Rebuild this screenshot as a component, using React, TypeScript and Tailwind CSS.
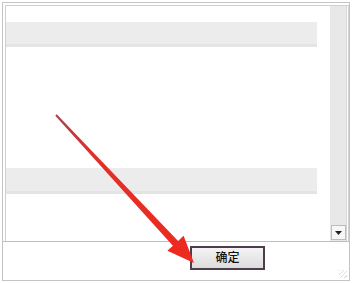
export default function App() {
  return (
    <div className="relative w-[355px] h-[283px] bg-white p-[2px] font-['Liberation_Sans','Noto_Sans_CJK_SC',sans-serif]">
      <div className="flex h-[279px] w-[348px] flex-col border border-[#c4c4c4] bg-white">
        {/* list */}
        <div className="ml-[2px] mt-[2px] flex h-[236px] border-l border-t border-r border-[#d0d0d0]">
          <div className="flex-1 pr-[13px] pt-[16px]">
            <div className="h-[25px] border-b-[3px] border-[#e4e4e4] bg-[#ececec]" />
            <div className="mt-[121px] h-[26px] border-b-[3px] border-[#e4e4e4] bg-[#ececec]" />
          </div>
          <div className="flex w-[16px] flex-col justify-end border-l border-[#e6e6e6] bg-[#e8e8e8] pb-[1px]">
            <div className="flex h-[15px] items-center justify-center border border-[#bdbdbd] bg-[#f7f7f7]">
              <svg width="7" height="4" viewBox="0 0 7 4">
                <path d="M0 0h7L3.5 4z" fill="#222" />
              </svg>
            </div>
          </div>
          <div className="w-[2px] border-l border-[#d6d6d6] bg-white" />
        </div>
        <div className="h-px bg-[#bdbdbd]" />
        {/* footer */}
        <div className="relative flex-1 pl-[187px] pt-[4px]">
          <button className="flex h-[24px] w-[75px] items-center justify-center border-2 border-[#4e3c4a] bg-gradient-to-b from-[#f4f4f4] to-[#dcdcdc] text-[12px] font-medium text-[#111]">
            确定
          </button>
          <div className="absolute bottom-[2px] right-[2px] h-[8px] w-[8px] bg-[repeating-linear-gradient(135deg,#dedede_0_1px,transparent_1px_3px)]" />
        </div>
      </div>
      {/* red arrow */}
      <svg className="pointer-events-none absolute left-0 top-0" width="355" height="283" viewBox="0 0 355 283">
        <defs>
          <linearGradient id="ar" x1="56" y1="115" x2="194" y2="263" gradientUnits="userSpaceOnUse">
            <stop offset="0" stopColor="#a8404c" />
            <stop offset="0.25" stopColor="#e0302a" />
            <stop offset="1" stopColor="#ee2a1e" />
          </linearGradient>
        </defs>
        <polygon
          points="55.3,115.7 172.9,245.7 167.4,250.8 194,263 183.6,235.8 178.1,240.9 56.7,114.3"
          fill="url(#ar)"
        />
      </svg>
    </div>
  );
}
